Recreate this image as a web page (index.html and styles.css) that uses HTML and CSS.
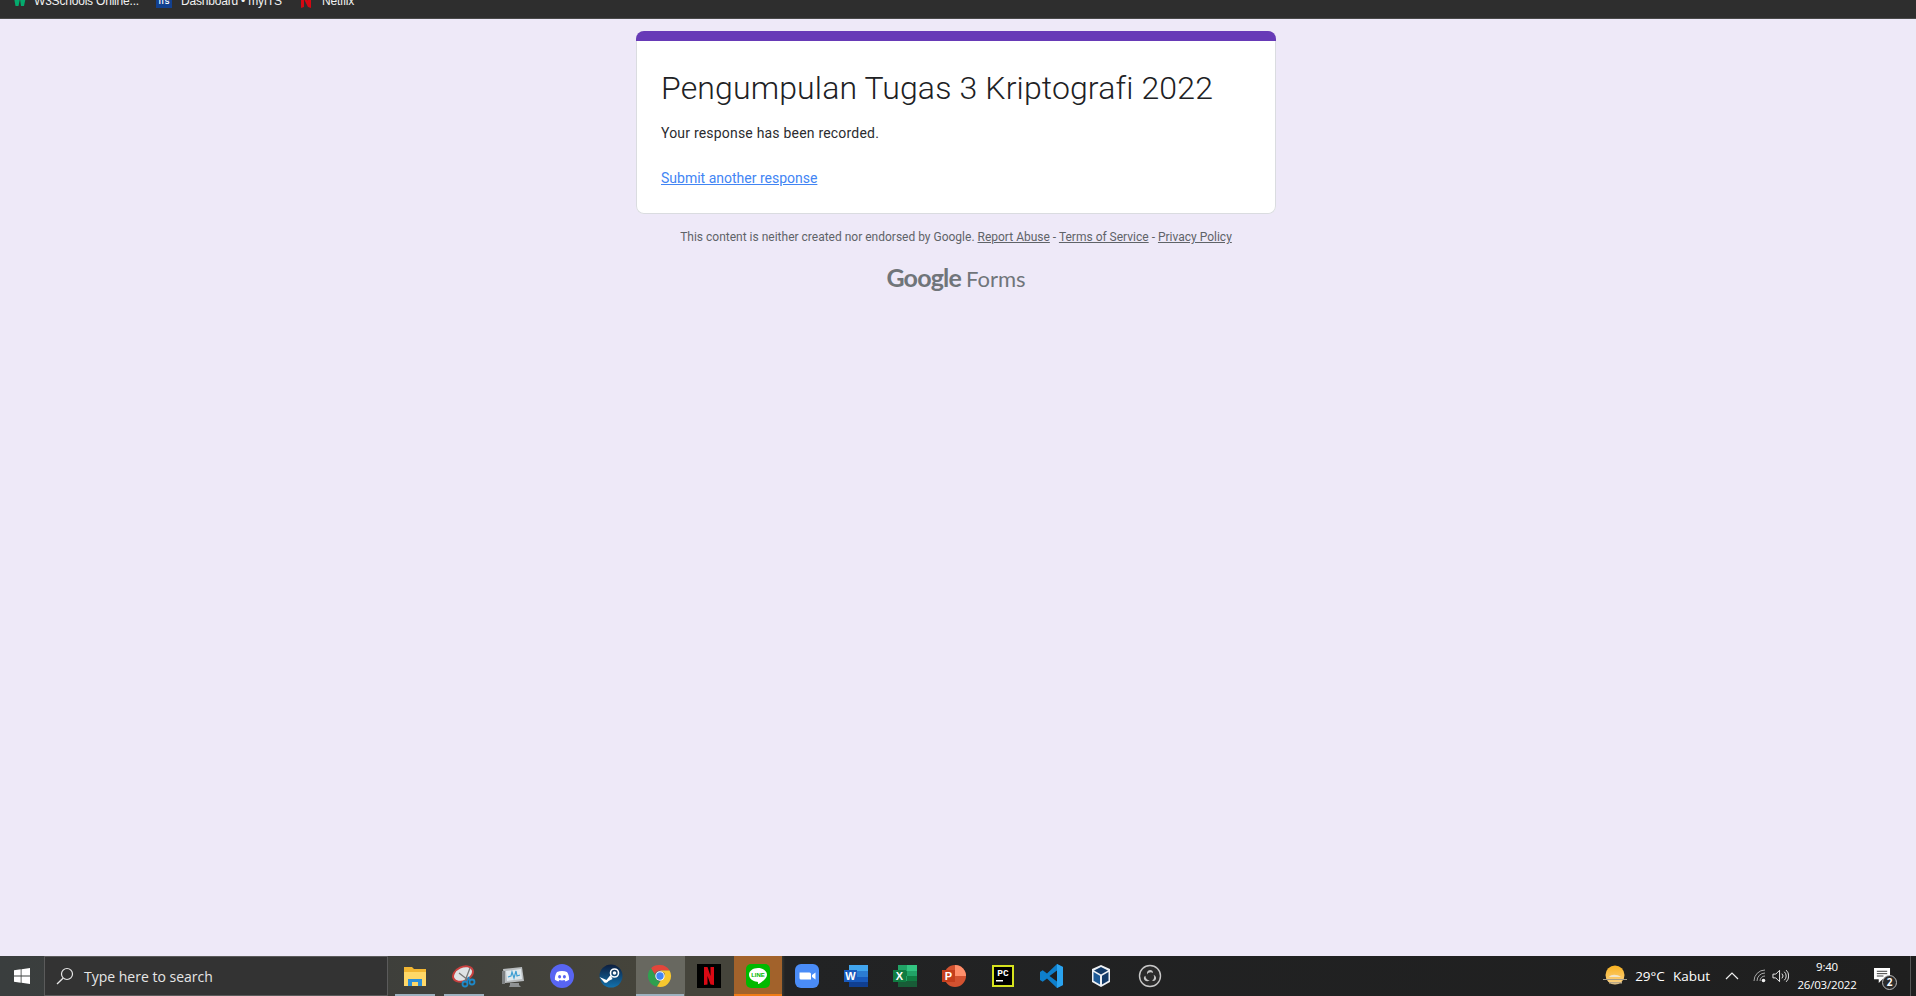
FILE: index.html
```html
<!DOCTYPE html>
<html lang="en">
<head>
<meta charset="utf-8">
<title>Pengumpulan Tugas 3 Kriptografi 2022</title>
<link rel="stylesheet" href="styles.css">
</head>
<body>
<div class="screen">
  <nav class="bookmarks">
    <div class="mark mark-w3">
      <svg class="mark-icon" viewBox="0 0 16 16"><path d="M1 0h3l2 8 2-8h1l2 8 2-8h2l-3 14h-3L8 7l-1.500 7h-3z" fill="#04aa6d"/></svg>
      <span>W3Schools Online...</span>
    </div>
    <div class="mark mark-its">
      <svg class="mark-icon" viewBox="0 0 16 16"><rect width="16" height="16" fill="#12408f"/><text x="8" y="12" text-anchor="middle" class="its-label">ITS</text></svg>
      <span>Dashboard • myITS</span>
    </div>
    <div class="mark mark-nf">
      <svg class="mark-icon mark-n" viewBox="0 0 12 16"><path d="M1 0h3l4 9V0h3v16l-3-1-4-8v8l-3 1z" fill="#d40812"/></svg>
      <span>Netflix</span>
    </div>
  </nav>

  <main class="page">
    <section class="card">
      <div class="card-bar"></div>
      <div class="card-body">
        <h1 class="title">Pengumpulan Tugas 3 Kriptografi 2022</h1>
        <p class="message">Your response has been recorded.</p>
        <a class="another" href="#">Submit another response</a>
      </div>
    </section>
    <p class="legal">This content is neither created nor endorsed by Google. <a href="#">Report Abuse</a> - <a href="#">Terms of Service</a> - <a href="#">Privacy Policy</a></p>
    <div class="brand"><span class="brand-g">Google</span><span class="brand-f">Forms</span></div>
  </main>

  <footer class="taskbar">
    <div class="start">
      <svg viewBox="0 0 16 16" class="win"><path d="M0 2.300 6.700 1.300V7.600H0zM7.500 1.200 16 0V7.600H7.500zM0 8.400H6.700V14.700L0 13.700zM7.500 8.400H16V16L7.500 14.800z" fill="#fff"/></svg>
    </div>
    <div class="search">
      <svg viewBox="0 0 18 18" class="glass"><circle cx="11" cy="7" r="5.500" fill="none" stroke="#e8e8e8" stroke-width="1.200"/><path d="M7 11.200 1 17" stroke="#e8e8e8" stroke-width="1.300" fill="none"/></svg>
      <span>Type here to search</span>
    </div>
    <div class="apps">
      <div class="app app-open">
        <svg viewBox="0 0 24 24"><path d="M1 3h8l2 2h12v17H1z" fill="#f2b632"/><path d="M1 8h22v14H1z" fill="#ffd867"/><rect x="5" y="15" width="14" height="7" fill="#2d8fd8"/><rect x="9" y="18" width="6" height="4" fill="#ffd867"/></svg>
      </div>
      <div class="app app-open">
        <svg viewBox="0 0 24 24"><ellipse cx="11" cy="10" rx="10.500" ry="7" fill="#dfe3e6" stroke="#c8403f" stroke-width="2" transform="rotate(-25 11 10)"/><path d="M7 9l9 7M18 4l-5 13" stroke="#777" stroke-width="1.300"/><circle cx="13" cy="20" r="2.500" fill="none" stroke="#1d88c9" stroke-width="1.800"/><circle cx="20" cy="18" r="2.500" fill="none" stroke="#1d88c9" stroke-width="1.800"/><path d="M15 18l2-5M18 17l-2-4" stroke="#1d88c9" stroke-width="1.600"/></svg>
      </div>
      <div class="app">
        <svg viewBox="0 0 24 24"><path d="M2 5l19-2 2 14-19 2z" fill="#b9bdbf"/><path d="M5 7l15-2 1 10-15 2z" fill="#dfe8ec"/><path d="M7 13l3-1 1-4 2 6 2-7 1 5 3-1" fill="none" stroke="#3e9fd3" stroke-width="1.200"/><path d="M9 19h9v2l2 2H8l1-2z" fill="#8f9293"/><path d="M1 7h3v13H1z" fill="#7e8182"/></svg>
      </div>
      <div class="app">
        <svg viewBox="0 0 24 24"><circle cx="12" cy="12" r="12" fill="#5865f2"/><path d="M7 8c3-1.400 7-1.400 10 0 1.600 2.400 2.300 5 2.100 7.700-1.200.9-2.400 1.400-3.600 1.700l-.9-1.400c-1.700.5-3.500.5-5.200 0l-.9 1.400c-1.200-.3-2.400-.8-3.600-1.700C4.700 13 5.400 10.400 7 8z" fill="#fff"/><ellipse cx="9.600" cy="12.700" rx="1.500" ry="1.700" fill="#5865f2"/><ellipse cx="14.400" cy="12.700" rx="1.500" ry="1.700" fill="#5865f2"/></svg>
      </div>
      <div class="app">
        <svg viewBox="0 0 24 24"><defs><linearGradient id="steamfill" x1="0" y1="0" x2="0" y2="1"><stop offset="0" stop-color="#0d1d3d"/><stop offset="1" stop-color="#1272ae"/></linearGradient></defs><circle cx="12" cy="12" r="11.500" fill="url(#steamfill)"/><circle cx="15.500" cy="9" r="4" fill="none" stroke="#fff" stroke-width="1.600"/><circle cx="15.500" cy="9" r="1.800" fill="#fff"/><path d="M0.500 13l7 3 4-5 2 4-4 2c-1 2-4 2.500-5 .5z" fill="#fff"/></svg>
      </div>
      <div class="app app-active">
        <svg viewBox="0 0 24 24"><path d="M12 1a11 11 0 0 1 9.530 5.500H12A5.500 5.500 0 0 0 6.800 10L3 4.200A11 11 0 0 1 12 1z" fill="#e2463b"/><path d="M3 4.200 7.400 12a5 5 0 0 0 4.300 5.500L9 22.600A11 11 0 0 1 3 4.200z" fill="#2fa04f"/><path d="M21.530 6.500A11 11 0 0 1 12 23l-3-.4 4.800-7.500A5 5 0 0 0 16.500 9l-4.500-2.500z" fill="#f7c72f"/><circle cx="12" cy="12" r="4.700" fill="#fff"/><circle cx="12" cy="12" r="3.700" fill="#4285f4"/></svg>
      </div>
      <div class="app">
        <svg viewBox="0 0 24 24"><rect width="24" height="24" fill="#000"/><path d="M7 3h3.500l3 9V3H17v18l-3.500-.6-3-8.400v8.400L7 21z" fill="#d90914"/></svg>
      </div>
      <div class="app app-alert">
        <svg viewBox="0 0 24 24"><rect width="24" height="24" rx="5" fill="#00b900"/><path d="M12 4c5 0 9 2.900 9 6.700 0 3.700-5 7.200-8.300 9.300-.6.300-.7-.4-.6-1 .1-.7-.2-1.200-1-1.300C6.600 17.300 3 14.400 3 10.700 3 6.900 7 4 12 4z" fill="#fff"/><text x="12" y="13" text-anchor="middle" class="line-label">LINE</text></svg>
      </div>
      <div class="app">
        <svg viewBox="0 0 24 24"><rect width="24" height="24" rx="6" fill="#4a8cf7"/><path d="M4.500 8.500h10a1.500 1.500 0 0 1 1.500 1.500v5.500H6A1.500 1.500 0 0 1 4.500 14z" fill="#fff"/><path d="M17 11l3.500-2.500v7L17 13z" fill="#fff"/></svg>
      </div>
      <div class="app">
        <svg viewBox="0 0 24 24"><path d="M5 1h19v22H5z" fill="#2b7cd3"/><path d="M5 1h19v6H5z" fill="#41a5ee"/><path d="M5 13h19v5H5z" fill="#185abd"/><path d="M5 18h19v5H5z" fill="#103f91"/><rect y="6" width="13" height="12" fill="#185abd"/><text x="6.500" y="16" text-anchor="middle" class="office-label">W</text></svg>
      </div>
      <div class="app">
        <svg viewBox="0 0 24 24"><path d="M5 1h19v22H5z" fill="#21a366"/><path d="M14 1h10v6H14z" fill="#33c481"/><path d="M5 7h9v5H5z" fill="#107c41"/><path d="M14 12h10v5H14z" fill="#107c41"/><path d="M5 17h19v6H5z" fill="#185c37"/><rect y="6" width="13" height="12" fill="#107c41"/><text x="6.500" y="16" text-anchor="middle" class="office-label">X</text></svg>
      </div>
      <div class="app">
        <svg viewBox="0 0 24 24"><circle cx="13" cy="12" r="11" fill="#d35230"/><path d="M13 1a11 11 0 0 1 11 11H13z" fill="#ff8f6b"/><rect y="6" width="13" height="12" fill="#c43e1c"/><text x="6.500" y="16" text-anchor="middle" class="office-label">P</text></svg>
      </div>
      <div class="app">
        <svg viewBox="0 0 24 24"><rect x="1" y="1" width="22" height="22" fill="#d6e21e"/><rect x="3" y="3" width="18" height="18" fill="#000"/><text x="12" y="12" text-anchor="middle" class="pc-label">PC</text><rect x="5" y="16" width="7" height="1.500" fill="#fff"/></svg>
      </div>
      <div class="app">
        <svg viewBox="0 0 24 24"><path d="M17 0l6 3v18l-6 3-10-9.500-4.300 3.300L0 16V8l2.700-1.800L7 9.500z" fill="#0e7fcb"/><path d="M17 6.500 9.500 12l7.500 5.500z" fill="#1f1f1f"/><path d="M17 0l6 3v18l-6 3z" fill="#2aa3ef"/></svg>
      </div>
      <div class="app">
        <svg viewBox="0 0 24 24"><path d="M12 1l9 4v13l-9 5-9-5V5z" fill="#eef1f5"/><path d="M12 3 19 6.500 12 10.500 5 6.500z" fill="#123a68"/><path d="M4.500 8l6.500 3.700v8.800L4.500 16.800z" fill="#1d5a96"/><path d="M13 11.700l6.500-3.700v8.800L13 20.500z" fill="#123a68"/></svg>
      </div>
      <div class="app">
        <svg viewBox="0 0 24 24"><circle cx="12" cy="12" r="10.500" fill="#2b2b2b" stroke="#c8c8c8" stroke-width="1.400"/><path d="M12 6a3 3 0 0 1 3 3c-2-1.500-5-.5-6 1.500A4 4 0 0 1 12 6zM18 15a3 3 0 0 1-4 1.500c2.300-1 2.800-4 1.500-5.800A4 4 0 0 1 18 15zM6.500 16a3 3 0 0 1 1-4.200c-.2 2.500 2 4.600 4.300 4.500a4 4 0 0 1-5.300-.3z" fill="#c8c8c8"/></svg>
      </div>
    </div>
    <div class="tray">
      <div class="weather">
        <svg viewBox="0 0 24 24" class="sun"><defs><linearGradient id="sunfill" x1="0" y1="0" x2="0" y2="1"><stop offset="0" stop-color="#f9b21f"/><stop offset="1" stop-color="#fbd38a"/></linearGradient></defs><circle cx="12" cy="11" r="9.500" fill="url(#sunfill)"/><path d="M0 15h24v1H0z" fill="#a59c89"/><path d="M6 13c2-3 8-3 12 0z" fill="#f2e6cb"/><path d="M6 18h13v1.500H6z" fill="#b9a888"/></svg>
        <span class="temp">29°C</span>
        <span class="cond">Kabut</span>
      </div>
      <svg viewBox="0 0 14 8" class="chev"><path d="M1 7l6-6 6 6" fill="none" stroke="#f0f0f0" stroke-width="1.200"/></svg>
      <svg viewBox="0 0 14 14" class="wifi"><path d="M1 12A11 11 0 0 1 12 1M4 12A8 8 0 0 1 12 4M7 12A5 5 0 0 1 12 7" fill="none" stroke="#a9a9a9" stroke-width="1"/><circle cx="10.500" cy="11.500" r="1.800" fill="#f0f0f0"/></svg>
      <svg viewBox="0 0 18 14" class="speaker"><path d="M1 5h3l4-4v12l-4-4H1z" fill="none" stroke="#f0f0f0" stroke-width="1"/><path d="M10.500 4.500a3.500 3.500 0 0 1 0 5M13 2.500a6 6 0 0 1 0 9M15 .8a8.500 8.500 0 0 1 0 12.400" fill="none" stroke="#f0f0f0" stroke-width="1"/></svg>
      <div class="clock"><span>9:40</span><span>26/03/2022</span></div>
      <div class="notify">
        <svg viewBox="0 0 18 17" class="bubble"><path d="M0 0h17v12h-8l-4 4v-4H0z" fill="#fff"/><path d="M3 3.500h11M3 6h11M3 8.500h7" stroke="#333" stroke-width="1"/></svg>
        <span class="badge">2</span>
      </div>
      <div class="desk"></div>
    </div>
  </footer>
</div>
</body>
</html>
```
FILE: styles.css
```css
* { box-sizing: border-box; }
html, body { margin: 0; height: 100%; overflow: hidden; }
body { background: #eee9f8; font-family: Roboto, "Liberation Sans", sans-serif; }
.screen { display: flex; flex-direction: column; height: 996px; }

.bookmarks {
  flex: none; height: 19px; background: #2e2e2e; border-bottom: 1px solid #4a4a4a;
  display: flex; align-items: flex-end; overflow: hidden;
  font: 12px/16px "Liberation Sans", Roboto, sans-serif; color: #f1f1f1; letter-spacing: -0.2px;
  padding: 0 0 9px 0;
}
.mark { display: flex; align-items: center; height: 16px; flex: none; }
.mark span { white-space: nowrap; }
.mark-icon { width: 16px; height: 16px; flex: none; margin-bottom: 3px; }
.mark-n { width: 12px; }
.mark-w3 { width: 156px; padding-left: 12px; gap: 6px; }
.mark-its { width: 144px; gap: 9px; }
.mark-nf { gap: 10px; }
.its-label { font: bold 7px "Liberation Sans", sans-serif; fill: #fff; }

.page { flex: 1; min-height: 0; display: flex; flex-direction: column; align-items: center; padding: 12px 4px 0 0; }
.card {
  width: 640px; height: 183px; background: #fff; box-shadow: inset 0 0 0 1px #dadce0; border-radius: 8px; overflow: hidden;
}
.card-bar { height: 10px; background: #673ab7; }
.card-body { padding: 27px 25px 0; }
.title {
  margin: 0; font: 350 32px/40px Roboto, sans-serif; color: #202124; letter-spacing: 0.14px; white-space: nowrap;
}
.message { margin: 15px 0 0; font: 400 14px/20px Roboto, sans-serif; color: #2b2c2f; letter-spacing: 0.2px; }
.another { display: block; margin-top: 25px; font: 400 14px/20px Roboto, sans-serif; color: #4285f4; }
.legal { margin: 15px 0 0; font: 400 12px/16px Roboto, sans-serif; color: #5f6368; }
.legal a { color: #5f6368; }
.brand { margin-top: 16px; display: flex; align-items: baseline; gap: 5px; color: #70757a; font-family: Lato, sans-serif; }
.brand-g { font-size: 25px; line-height: 32px; font-weight: 700; letter-spacing: -0.8px; }
.brand-f { font-size: 22px; line-height: 32px; }

.taskbar {
  flex: none; height: 40px; display: flex; align-items: stretch; color: #fff;
  background: linear-gradient(90deg, #3a3e3e 0, #3e3f3b 380px, #45443b 640px, #45443b 780px, #222324 785px, #1f1f1f 1916px);
  font-family: "Open Sans", "Noto Sans", sans-serif;
}
.start { width: 44px; display: flex; align-items: center; justify-content: center; }
.win { width: 16px; height: 16px; }
.search {
  width: 344px; background: #333; border: 1px solid #5b5b5b;
  display: flex; align-items: center; padding-left: 11px; gap: 10px; font-size: 14px; color: #e6e6e6;
}
.glass { width: 18px; height: 18px; }
.apps { display: flex; margin-left: 3px; }
.app { width: 49px; display: flex; align-items: center; justify-content: center; position: relative; padding-right: 1px; }
.app svg { width: 24px; height: 24px; }
.app-open::after, .app-active::after, .app-alert::after {
  content: ""; position: absolute; left: 4px; right: 5px; bottom: 0; height: 2px; background: #9db1bf;
}
.app-active { background: #686860; }
.app-active::after { left: 0; right: 1px; }
.app-alert { background: #a2622b; width: 48px; margin-right: 1px; padding-right: 0; }
.app-alert::after { left: 0; right: 0; background: #f07b15; }
.line-label { font: bold 6px "Liberation Sans", sans-serif; fill: #00b900; }
.office-label { font: bold 11px "Liberation Sans", sans-serif; fill: #fff; }
.pc-label { font: bold 9.500px "Liberation Mono", monospace; fill: #fff; }

.tray { margin-left: auto; display: flex; align-items: center; font-size: 13.500px; position: relative; padding-right: 5px; }
.weather { display: flex; align-items: center; }
.sun { width: 24px; height: 24px; margin-right: 8px; }
.temp { margin-right: 8px; }
.cond { margin-right: 15px; }
.chev { width: 14px; height: 8px; margin-right: 14px; }
.wifi { width: 14px; height: 14px; margin-right: 5px; }
.speaker { width: 17px; height: 14px; margin-right: 7px; }
.clock { width: 62px; display: flex; flex-direction: column; align-items: center; font-size: 11.500px; line-height: 18px; letter-spacing: -0.2px; }
.notify { width: 44px; height: 40px; position: relative; margin-left: 9px; }
.bubble { width: 17px; height: 16px; position: absolute; left: 7px; top: 12px; }
.badge {
  position: absolute; left: 15px; top: 19px; width: 15px; height: 15px; border-radius: 50%;
  border: 1px solid #bbb; background: #2b2b2b; font-size: 10px; line-height: 13px; text-align: center; font-weight: 700;
}
.desk { width: 1px; height: 40px; background: #555; margin-left: -1px; }
```
